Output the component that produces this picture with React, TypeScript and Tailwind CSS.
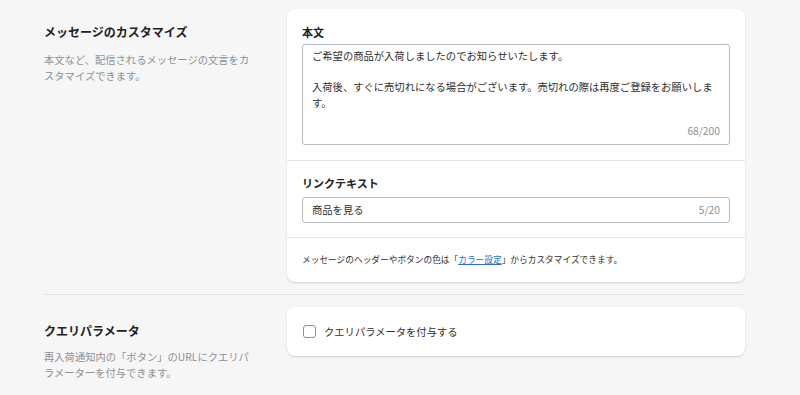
const font = "font-['Noto_Sans_CJK_JP','Noto_Sans',sans-serif]";

function SectionInfo({ title, lines }: { title: string; lines: string[] }) {
  return (
    <div className="w-[243px] shrink-0 pt-[13px]">
      <h2 className="text-[12px] font-bold leading-[20px] text-[#202223]">
        {title}
      </h2>
      <p className="mt-[10px] w-[215px] text-[10.3px] leading-[15.5px] text-[#8c9196]">
        {lines.map((l, i) => (
          <span key={i} className="block">
            {l}
          </span>
        ))}
      </p>
    </div>
  );
}

export default function App() {
  return (
    <div
      className={`${font} min-h-[395px] w-[800px] bg-[#f6f6f7] pl-[44px] pr-[55px] pt-[9px] text-[#303030]`}
    >
      <div className="flex">
        <SectionInfo
          title="メッセージのカスタマイズ"
          lines={["本文など、配信されるメッセージの文言をカ", "スタマイズできます。"]}
        />
        <div className="flex-1 rounded-[8px] bg-white shadow-[0_1px_2px_rgba(0,0,0,0.15)]">
          <div className="px-[15px] pt-[14px] pb-[15px] border-b border-[#e4e5e7]">
            <div className="text-[11px] font-bold leading-[18px] text-[#202223]">本文</div>
            <div className="mt-[3px] flex h-[101px] flex-col rounded-[3px] border border-[#b9bec3] px-[9px] pt-[3px] pb-[6px]">
              <div className="text-[10.3px] leading-[15.5px] text-[#303030]">
                <span className="block">ご希望の商品が入荷しましたのでお知らせいたします。</span>
                <span className="block h-[15.5px]"></span>
                <span className="block">
                  入荷後、すぐに売切れになる場合がございます。売切れの際は再度ご登録をお願いします。
                </span>
              </div>
              <div className="mt-auto text-right text-[10.3px] leading-[14px] text-[#8c9196]">
                68/200
              </div>
            </div>
          </div>
          <div className="px-[15px] pt-[13px] pb-[14px] border-b border-[#e4e5e7]">
            <div className="text-[11px] font-bold leading-[18px] text-[#202223]">
              リンクテキスト
            </div>
            <div className="mt-[5px] flex h-[26px] items-center justify-between rounded-[3px] border border-[#b9bec3] px-[9px] text-[10.3px]">
              <span className="text-[#303030]">商品を見る</span>
              <span className="text-[#8c9196]">5/20</span>
            </div>
          </div>
          <div className="flex h-[44px] items-center px-[15px] text-[8.7px] text-[#303030]">
            <span>
              メッセージのヘッダーやボタンの色は「
              <a className="text-[#2c6ecb] underline" href="#">
                カラー設定
              </a>
              」からカスタマイズできます。
            </span>
          </div>
        </div>
      </div>

      <div className="mt-[12px] border-t border-[#e1e3e5]" />

      <div className="flex pt-[12px]">
        <div className="w-[243px] shrink-0 pt-[14px]">
          <h2 className="text-[12px] font-bold leading-[20px] text-[#202223]">
            クエリパラメータ
          </h2>
          <p className="mt-[8px] w-[215px] text-[10.3px] leading-[15.5px] text-[#8c9196]">
            <span className="block">再入荷通知内の「ボタン」のURLにクエリパ</span>
            <span className="block">ラメーターを付与できます。</span>
          </p>
        </div>
        <div className="flex h-[49px] flex-1 items-center gap-[8px] self-start rounded-[8px] bg-white px-[16px] shadow-[0_1px_2px_rgba(0,0,0,0.15)]">
          <span className="h-[13px] w-[13px] rounded-[3px] border-[1.5px] border-[#8c9196]" />
          <span className="text-[10.3px] text-[#303030]">クエリパラメータを付与する</span>
        </div>
      </div>
    </div>
  );
}
